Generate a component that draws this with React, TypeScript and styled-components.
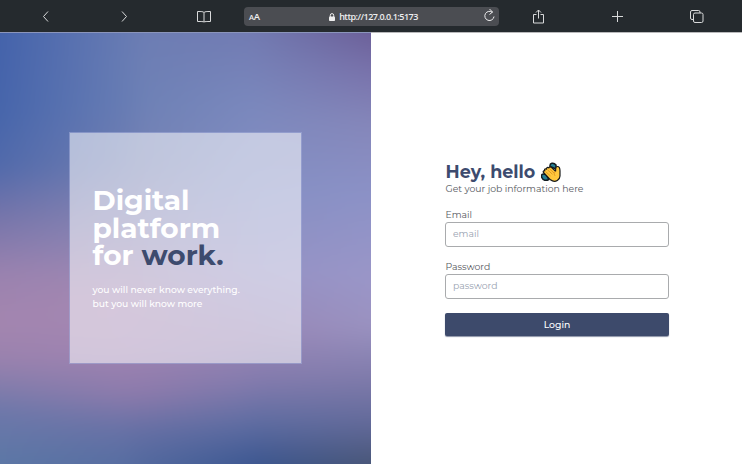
import React from "react";
import styled, { createGlobalStyle } from "styled-components";

const GlobalStyle = createGlobalStyle`
  * { box-sizing: border-box; }
  body { margin: 0; font-family: Montserrat, Inter, "Open Sans", sans-serif; }
  h1, h2, p { margin: 0; }
`;

const Page = styled.div`
  width: 742px;
  height: 464px;
  display: flex;
  flex-direction: column;
  overflow: hidden;
  background: #fff;
`;

const Toolbar = styled.header`
  height: 32px;
  flex: none;
  display: grid;
  grid-template-columns: 91px 66px 93px 249px 79px 79px 79px;
  align-items: center;
  justify-items: center;
  background: #252a2e;
  color: #d9dadb;
`;

const ToolIcon = styled.svg`
  display: block;
  width: 16px;
  height: 16px;
  fill: none;
  stroke: currentColor;
  stroke-width: 1;
`;

const AddressBar = styled.div`
  width: 255px;
  height: 19px;
  margin-left: -6px;
  padding: 0 4px 0 5px;
  display: grid;
  grid-template-columns: 16px 1fr 12px;
  align-items: center;
  border-radius: 4px;
  background: #4b4d52;
  color: #eeeeef;
`;

const TextSize = styled.span`
  padding-top: 1px;
  font: 600 9.5px/12px "Open Sans", sans-serif;
  letter-spacing: -0.3px;
  small { font-size: 7.5px; }
`;

const Address = styled.div`
  display: flex;
  align-items: center;
  justify-content: center;
  gap: 4px;
  padding: 1px 1px 0 0;
  font: 600 9px/12px "Open Sans", sans-serif;
  letter-spacing: -0.5px;
`;

const Content = styled.main`
  flex: 1;
  display: grid;
  grid-template-columns: 371px 1fr;
`;

const Backdrop = styled.section`
  display: grid;
  height: 432px;
  overflow: hidden;
  border-top: 1px solid #8b95bb;
  > * { grid-area: 1 / 1; }
`;

const Mesh = styled.div`
  display: grid;
  filter: blur(8px);
  transform: scale(1.12);
  > * { grid-area: 1 / 1; }
`;

/* Columns of colour, each fading in over the one to its left. */
const ColourColumn = styled.div<{ $stops: string; $from?: number; $to?: number }>`
  background: linear-gradient(to bottom, ${(p) => p.$stops});
  mask-image: ${(p) =>
    p.$to === undefined
      ? "none"
      : `linear-gradient(to right, transparent ${p.$from}%, #000 ${p.$to}%)`};
`;

const Card = styled.div`
  place-self: center;
  z-index: 1;
  width: 233px;
  height: 232px;
  margin: -1px 0 0 -1px;
  padding: 54px 23px 0;
  border: 1px solid rgba(160, 170, 215, 0.6);
  background: rgba(255, 255, 255, 0.54);
  background-clip: padding-box;
  color: #fff;
`;

const Headline = styled.h1`
  font-size: 28px;
  line-height: 27.6px;
  font-weight: 700;
  white-space: nowrap;
  em { font-style: normal; color: #3d4b6e; }
`;

const Line = styled.span`
  display: block;
`;

const Tagline = styled.p`
  margin-top: 13.5px;
  font-size: 9.2px;
  line-height: 14px;
  font-weight: 500;
  white-space: nowrap;
`;

const FormSide = styled.section`
  padding: 129px 0 0 74px;
  border-top: 1px solid #b9b9bb;
`;

const Form = styled.form`
  width: 224px;
  display: flex;
  flex-direction: column;
  color: #55585e;
`;

const Greeting = styled.div`
  height: 20px;
  padding-left: 0.5px;
  display: flex;
  align-items: center;
  gap: 6px;
  color: #3d4b6e;
`;

const Title = styled.h2`
  font-size: 17.5px;
  line-height: 20px;
  font-weight: 700;
`;

const Subtitle = styled.p`
  height: 14px;
  padding-left: 0.5px;
  font-size: 9.3px;
  line-height: 14px;
`;

const Field = styled.label`
  height: 38px;
  margin-top: 14px;
  display: flex;
  flex-direction: column;
  font-size: 9.3px;
  line-height: 12px;
  &:first-of-type { margin-top: 13px; }
`;

const FieldName = styled.span`
  display: block;
  height: 13px;
  padding-left: 0.5px;
`;

const Input = styled.input`
  height: 25px;
  flex: none;
  padding: 0 7px 2px;
  border: 1px solid #a9abad;
  border-radius: 3px;
  outline: 0;
  background: #fff;
  font: 400 9.3px Montserrat, Inter, sans-serif;
  &::placeholder { color: #98a1b0; opacity: 1; }
`;

const LoginButton = styled.button`
  height: 23px;
  margin-top: 14px;
  padding: 0 0 1px;
  border: 0;
  border-radius: 2px;
  background: #3d4a6b;
  box-shadow: 0 1px 1px rgba(61, 74, 107, 0.6);
  color: #fff;
  font: 500 9.3px Montserrat, Inter, sans-serif;
`;

const WaveIcon = styled.svg`
  width: 20px;
  height: 21px;
`;

const LockIcon = styled.svg`
  width: 6px;
  height: 8px;
`;

export default function App() {
  return (
    <>
      <GlobalStyle />
      <Page>
        <Toolbar>
          <ToolIcon viewBox="0 0 16 16"><path d="M10 3.500 5.500 8.500l4.500 5" /></ToolIcon>
          <ToolIcon viewBox="0 0 16 16"><path d="M6 3.500 10.500 8.500l-4.500 5" /></ToolIcon>
          <ToolIcon viewBox="0 0 16 16">
            <path d="M8 4.500C7 3.500 5.500 3.500 1.500 3.500v10c4 0 5.500 0 6.500.5 1-.5 2.500-.5 6.500-.5v-10C10.500 3.500 9 3.500 8 4.500Zm0 0V14" />
          </ToolIcon>
          <AddressBar>
            <TextSize><small>A</small>A</TextSize>
            <Address>
              <LockIcon viewBox="0 0 6 8">
                <rect x="0" y="3.500" width="6" height="4.500" rx=".8" fill="currentColor" />
                <path d="M1.300 4V2.300a1.700 1.700 0 0 1 3.400 0V4" fill="none" stroke="currentColor" />
              </LockIcon>
              http://127.0.0.1:5173
            </Address>
            <ToolIcon viewBox="2 0 16 16">
              <path d="M11.500 4.500A4.600 4.600 0 1 0 13 8.500M8.500 1l3 3-3 2.500" />
            </ToolIcon>
          </AddressBar>
          <ToolIcon viewBox="0 0 16 16">
            <path d="M5.500 6.500h-3V15h10V6.500h-3M7.500 10.500V2M5 4.500 7.500 2 10 4.500" />
          </ToolIcon>
          <ToolIcon viewBox="0 0 16 16"><path d="M7.500 3v11M2 8.500h11" /></ToolIcon>
          <ToolIcon viewBox="0 0 16 16">
            <rect x="4.500" y="5" width="9.500" height="9.500" rx="1.500" />
            <path d="M4.500 11.500H3A1.500 1.500 0 0 1 1.500 10V4A1.500 1.500 0 0 1 3 2.500H9.500A1.500 1.500 0 0 1 11 4v1" />
          </ToolIcon>
        </Toolbar>
        <Content>
          <Backdrop>
            <Mesh>
              <ColourColumn $stops="#4161ab 0%, #4564ab 22%, #5069ab 33%, #7474aa 43%, #9a82af 55%, #a486b0 65%, #9a82ae 73%, #6c78aa 84%, #5c78a6 95%" />
              <ColourColumn $from={3} $to={40} $stops="#6c7eb4 5%, #6c80b5 20%, #7480b2 33%, #8a87b5 46%, #a488b2 60%, #a084b2 71%, #8f7bac 80%, #6670a5 88%, #566ca1 95%" />
              <ColourColumn $from={35} $to={68} $stops="#727bb2 5%, #7b88bd 20%, #8590c4 38%, #9592c4 55%, #9886b6 68%, #857cae 77%, #5f6da2 86%, #3b5690 95%" />
              <ColourColumn $from={66} $to={96} $stops="#6a5c95 4%, #7871aa 13%, #8586b9 24%, #8b91c6 38%, #9a96c8 56%, #9a92c0 66%, #817cac 76%, #636a9a 86%, #465473 96%" />
            </Mesh>
            <Card>
              <Headline>
                <Line>Digital</Line>
                <Line>platform</Line>
                <Line>for <em>work.</em></Line>
              </Headline>
              <Tagline>
                <Line>you will never know everything.</Line>
                <Line>but you will know more</Line>
              </Tagline>
            </Card>
          </Backdrop>
          <FormSide>
            <Form onSubmit={(e) => e.preventDefault()}>
              <Greeting>
                <Title>Hey, hello</Title>
                <WaveIcon viewBox="0 0 20 21">
                  <path d="M9 4.500C8.500 1 12.500 0 15 3v4ZM5 12.500c-3.500-1.500-5.300 0-4.200 3s4.500 3.500 7 2Z" fill="#267f94" stroke="#111b20" strokeWidth="1.500" />
                  <path d="M2.500 10.500c-.8-1.200.2-2 1.300-1.700-.8-1.500.8-2.500 1.800-1.700-.3-1.500 1.200-2.200 2.200-1.200.5-1.600 2-1.200 2.800-.3l4 3.600c0-2 .2-4.500 1.500-4.700 2.200-.1 2.800 1.500 2.900 4.300v5.200c0 2-1.200 3.500-2.700 4.500-2.300 1.500-5 .8-6.800-.7Z" fill="#ffc83d" stroke="#17191a" strokeWidth="1.200" strokeLinejoin="round" />
                  <path d="m4.500 9.500 5 4.500M6.500 7.800l5 4.500M8.500 6.800l4.500 4.200M14.500 9.300c-1.500 1.500-1.500 3-.5 4.500" fill="none" stroke="#d98d1d" strokeWidth=".8" />
                </WaveIcon>
              </Greeting>
              <Subtitle>Get your job information here</Subtitle>
              <Field>
                <FieldName>Email</FieldName>
                <Input type="email" placeholder="email" />
              </Field>
              <Field>
                <FieldName>Password</FieldName>
                <Input type="password" placeholder="password" />
              </Field>
              <LoginButton type="submit">Login</LoginButton>
            </Form>
          </FormSide>
        </Content>
      </Page>
    </>
  );
}
